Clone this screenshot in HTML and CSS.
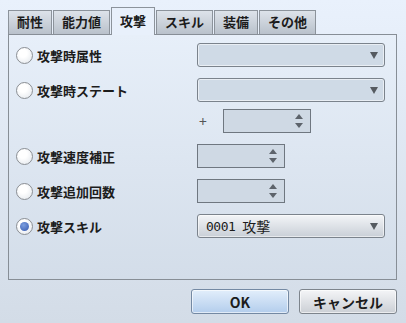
FILE: index.html
```html
<!DOCTYPE html>
<html lang="ja">
<head>
<meta charset="utf-8">
<link rel="stylesheet" href="styles.css">
</head>
<body>
<div class="dialog">
  <div class="tabs">
    <div class="tab">耐性</div>
    <div class="tab">能力値</div>
    <div class="tab active">攻撃</div>
    <div class="tab">スキル</div>
    <div class="tab">装備</div>
    <div class="tab">その他</div>
  </div>
  <div class="panel">
    <div class="row">
      <div class="opt"><span class="radio"></span><span class="label">攻撃時属性</span></div>
      <div class="select"><span class="arrow"></span></div>
    </div>
    <div class="row">
      <div class="opt"><span class="radio"></span><span class="label">攻撃時ステート</span></div>
      <div class="select"><span class="arrow"></span></div>
    </div>
    <div class="row sub">
      <span class="plus">+</span>
      <div class="spin"><span class="spinarrows"><span class="up"></span><span class="down"></span></span></div>
    </div>
    <div class="row">
      <div class="opt"><span class="radio"></span><span class="label">攻撃速度補正</span></div>
      <div class="spin"><span class="spinarrows"><span class="up"></span><span class="down"></span></span></div>
    </div>
    <div class="row">
      <div class="opt"><span class="radio"></span><span class="label">攻撃追加回数</span></div>
      <div class="spin"><span class="spinarrows"><span class="up"></span><span class="down"></span></span></div>
    </div>
    <div class="row">
      <div class="opt"><span class="radio checked"></span><span class="label">攻撃スキル</span></div>
      <div class="select filled"><span class="value"><span class="num">0001</span> <span class="kanji">攻撃</span></span><span class="arrow"></span></div>
    </div>
  </div>
  <div class="buttons">
    <button class="btn ok">OK</button>
    <button class="btn">キャンセル</button>
  </div>
</div>
</body>
</html>
```

FILE: styles.css
```css
* { box-sizing: border-box; }
html, body { margin: 0; padding: 0; }
body {
  font-family: "Noto Sans CJK JP", "Noto Sans", sans-serif;
  color: #1c1c1c;
}
.dialog {
  width: 406px;
  height: 323px;
  padding: 7px 9px 0 8px;
  background: linear-gradient(#e9f1fc, #d3dce7);
  overflow: hidden;
}
.tabs {
  display: flex;
  align-items: flex-end;
  height: 28px;
  margin-bottom: -1px;
  gap: 1px;
}
.tab {
  height: 24px;
  margin-bottom: 1px;
  padding: 0 8px;
  border: 1px solid #8c939b;
  border-bottom: none;
  background: linear-gradient(#dde3ea, #b9c1cb);
  font-size: 13px;
  font-weight: bold;
  line-height: 22px;
  white-space: nowrap;
}
.tab.active {
  height: 28px;
  margin-bottom: 0;
  background: #e8f0fb;
  line-height: 26px;
  position: relative;
  z-index: 1;
}
.panel {
  width: 389px;
  height: 246px;
  border: 1px solid #878e96;
  padding-top: 8px;
  background: linear-gradient(#e7eff9, #d3dde9);
}
.row {
  display: flex;
  align-items: center;
  height: 24px;
  margin-bottom: 11px;
}
.row:nth-child(2) { margin-bottom: 7px; }
.sub { padding-left: 188px; }
.plus {
  width: 12px;
  text-align: center;
  font-size: 14px;
  color: #555;
  margin-right: 14px;
  line-height: 24px;
}
.opt {
  width: 188px;
  padding-left: 7px;
  display: flex;
  align-items: center;
  gap: 4px;
}
.label {
  font-size: 13px;
  font-weight: bold;
  white-space: nowrap;
}
.radio {
  width: 17px;
  height: 17px;
  border-radius: 50%;
  border: 1px solid #8b8f94;
  background: radial-gradient(circle at 40% 35%, #ffffff 30%, #dfe4ea 100%);
  display: flex;
  align-items: center;
  justify-content: center;
  flex: none;
}
.radio.checked::after {
  content: "";
  width: 9px;
  height: 9px;
  border-radius: 50%;
  background: radial-gradient(circle at 40% 35%, #7b9ee0, #3558ad);
}
.select {
  width: 188px;
  height: 24px;
  border: 1px solid #7b838c;
  border-radius: 3px;
  background: #cfdae6;
  box-shadow: inset 0 0 0 1px rgba(255,255,255,0.55);
  display: flex;
  align-items: center;
  justify-content: flex-end;
  padding-right: 6px;
}
.select.filled {
  justify-content: space-between;
  padding-left: 8px;
  background: linear-gradient(#f3f5f8, #c9cfd7);
}
.value {
  display: flex;
  align-items: center;
  gap: 7px;
}
.num {
  font-family: "DejaVu Sans Mono", "Liberation Mono", monospace;
  font-size: 13px;
  letter-spacing: -0.5px;
}
.kanji {
  font-size: 14px;
  line-height: 1;
}
.arrow {
  width: 0;
  height: 0;
  border-left: 4px solid transparent;
  border-right: 4px solid transparent;
  border-top: 7px solid #555a60;
}
.spin {
  width: 88px;
  height: 24px;
  border: 1px solid #6f7780;
  background: #cfd9e4;
  display: flex;
  justify-content: flex-end;
  align-items: center;
  padding-right: 7px;
}
.spinarrows {
  display: flex;
  flex-direction: column;
  gap: 4px;
}
.up, .down {
  width: 0;
  height: 0;
  border-left: 4px solid transparent;
  border-right: 4px solid transparent;
}
.up { border-bottom: 5px solid #5d636b; }
.down { border-top: 5px solid #5d636b; }
.buttons {
  display: flex;
  justify-content: flex-end;
  gap: 10px;
  margin-top: 9px;
}
.btn {
  width: 98px;
  height: 25px;
  border: 1px solid #7d848c;
  border-radius: 3px;
  background: linear-gradient(#f4f5f7, #cbcfd5);
  box-shadow: inset 0 0 0 1px rgba(255,255,255,0.6);
  font-family: "Noto Sans CJK JP", "Noto Sans", sans-serif;
  font-size: 14px;
  font-weight: bold;
  color: #1c1c1c;
  padding: 0;
  line-height: 22px;
}
.btn.ok {
  border-color: #7489a3;
  background: linear-gradient(#e2eefb, #b3cdec);
}
```
